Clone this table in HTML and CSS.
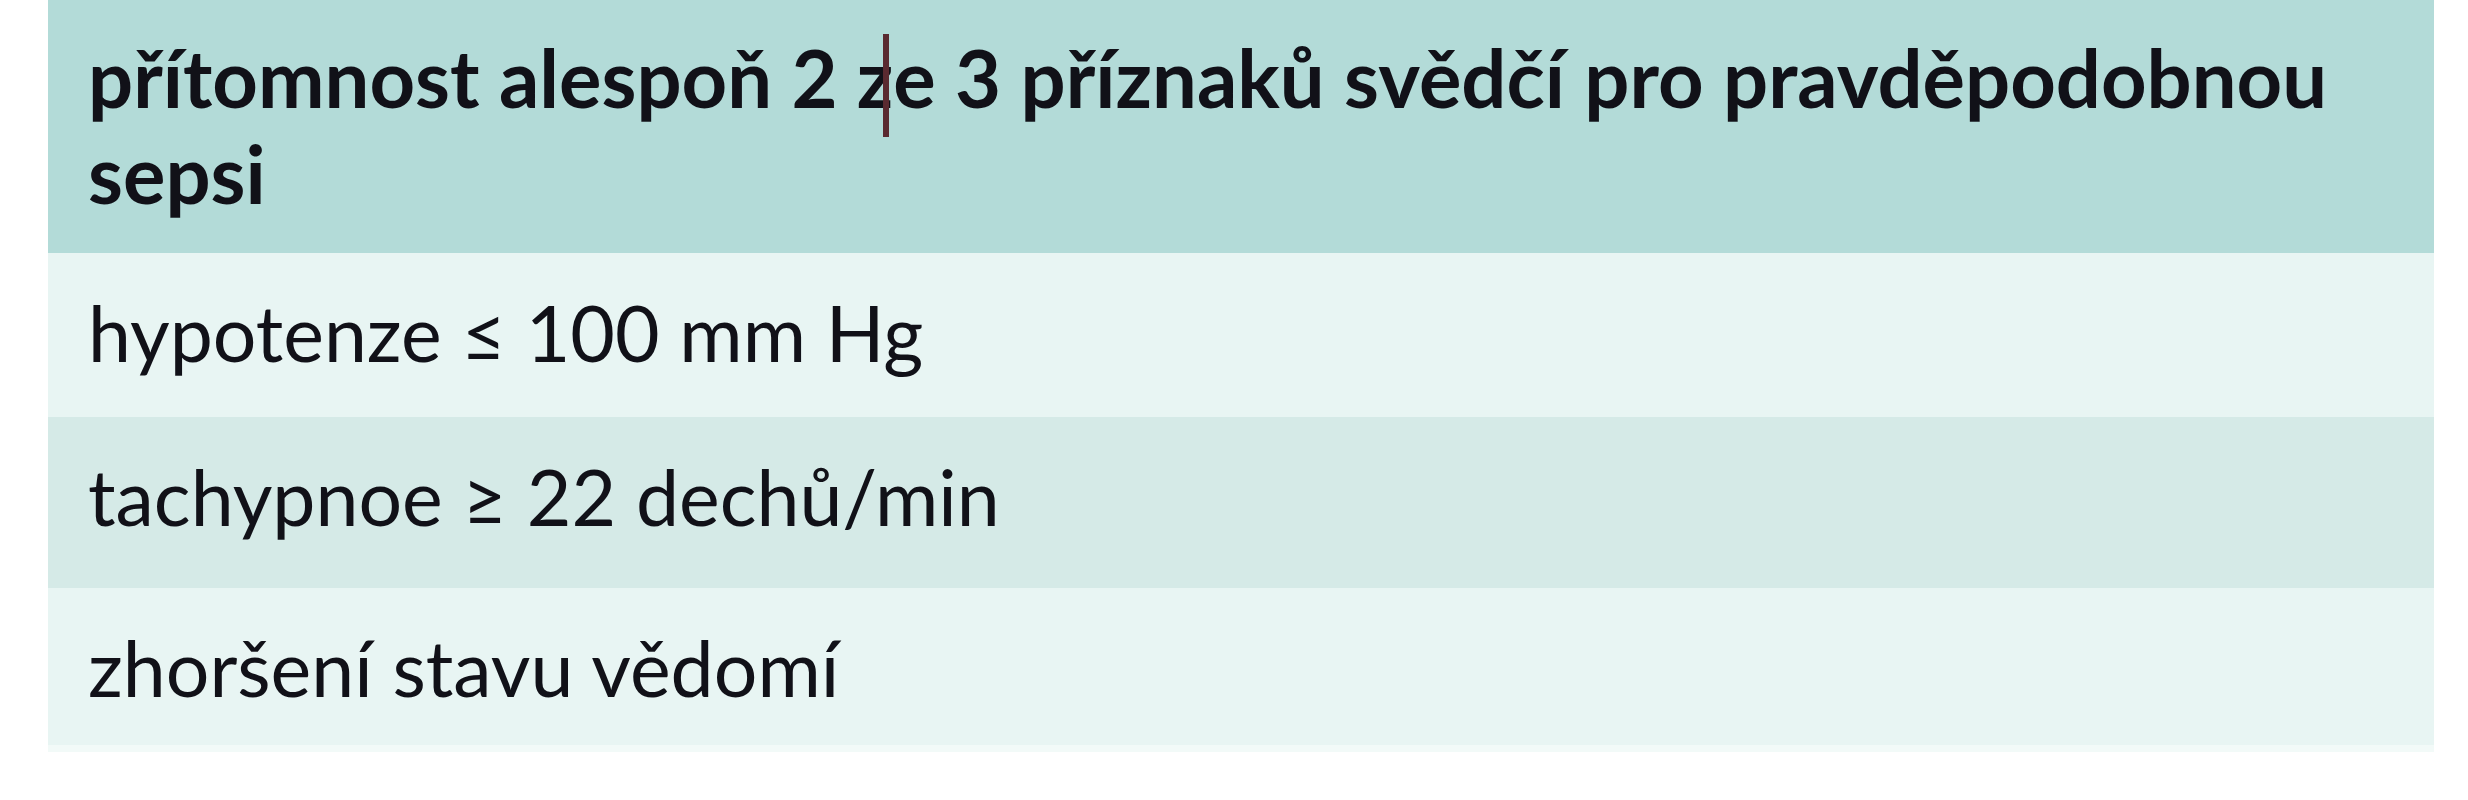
FILE: index.html
```html
<!DOCTYPE html>
<html lang="cs">
<head>
<meta charset="utf-8">
<title>Sepse</title>
<link rel="stylesheet" href="styles.css">
</head>
<body>
<table class="criteria">
  <thead>
    <tr class="head-row">
      <th>přítomnost alespoň 2 <span class="caret-at">z</span>e 3 příznaků svědčí pro pravděpodobnou sepsi</th>
    </tr>
  </thead>
  <tbody>
    <tr class="row-light r1"><td>hypotenze ≤ 100 mm Hg</td></tr>
    <tr class="row-dark r2"><td>tachypnoe ≥ 22 dechů/min</td></tr>
    <tr class="row-light r3"><td>zhoršení stavu vědomí</td></tr>
    <tr class="row-edge"><td></td></tr>
  </tbody>
</table>
</body>
</html>
```

FILE: styles.css
```css
html, body {
  margin: 0;
  padding: 0;
  background: #ffffff;
}
body {
  padding-left: 48px;
  font-family: Lato, "Open Sans", sans-serif;
  color: #111118;
}
.criteria {
  width: 2386px;
  border-collapse: collapse;
  border-spacing: 0;
}
.criteria th,
.criteria td {
  text-align: left;
  vertical-align: top;
  padding: 0 20px 0 40px;
  line-height: 96px;
  box-sizing: border-box;
}
.criteria th {
  font-weight: 700;
  font-size: 79.5px;
  height: 253px;
  padding-top: 30px;
}
.criteria td {
  font-weight: 400;
  font-size: 77px;
  padding-top: 31px;
}
.head-row { background: #b3dbd8; }
.row-light { background: #e8f5f3; }
.row-dark { background: #d5eae7; }
.r1 td { height: 164px; }
.r2 td { height: 171px; }
.r3 td { height: 157px; }
.row-edge td {
  height: 7px;
  padding: 0;
  line-height: 0;
  background: #f2faf8;
}
.caret-at {
  position: relative;
}
.caret-at::after {
  content: "";
  position: absolute;
  left: 72%;
  top: 4px;
  width: 6px;
  height: 103px;
  background: #5a2a30;
}
```
